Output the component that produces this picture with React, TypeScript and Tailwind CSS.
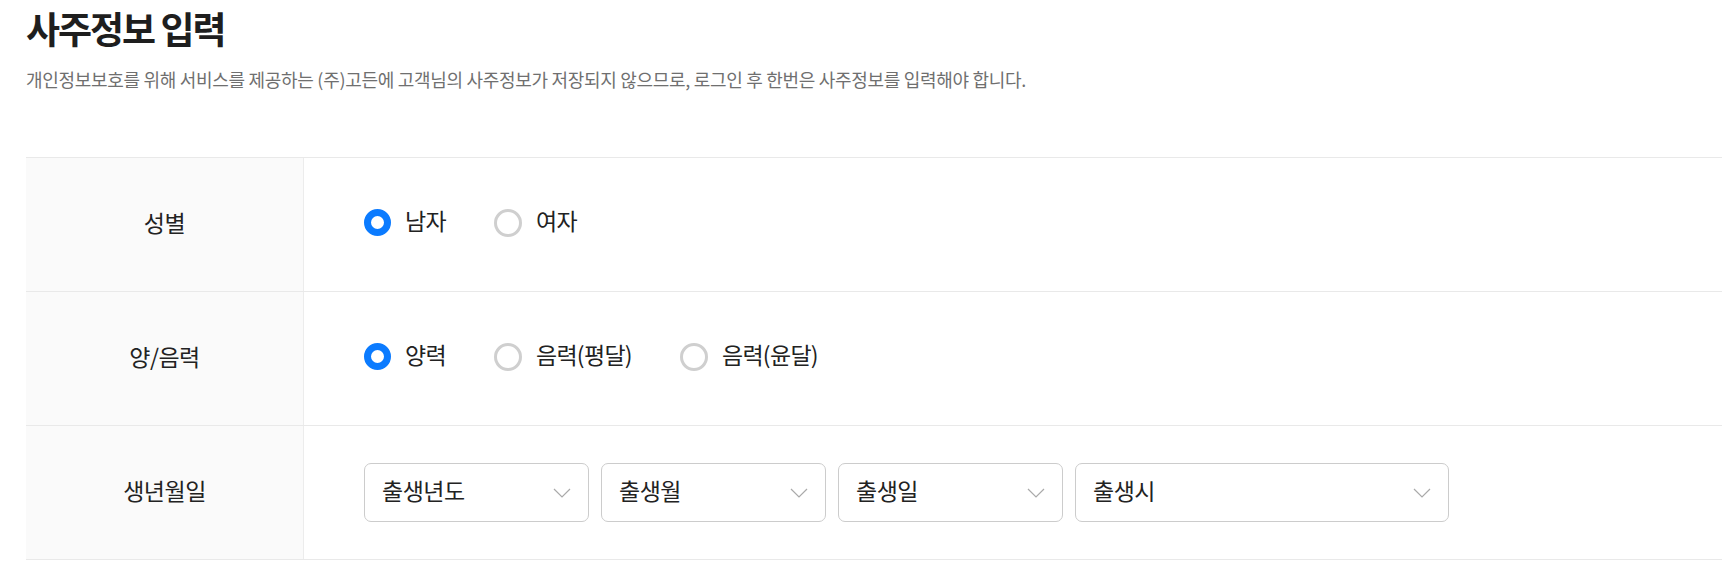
import React from "react";

const font = { fontFamily: '"Noto Sans CJK KR", "Noto Sans", sans-serif' };

const Radio = ({ label, checked }: { label: string; checked?: boolean }) => (
  <label className="flex items-center gap-[14px] cursor-pointer">
    {checked ? (
      <span className="w-[27px] h-[27px] rounded-full border-[7px] border-[#0b7bff] bg-white" />
    ) : (
      <span className="w-[28px] h-[28px] rounded-full border-[3px] border-[#cfcfcf] bg-white" />
    )}
    <span className="text-[23px] text-[#222] tracking-[-0.7px] pb-[4px]">{label}</span>
  </label>
);

const Chevron = () => (
  <svg width="18" height="10" viewBox="0 0 18 10" fill="none">
    <polyline points="1,1 9,9 17,1" stroke="#aaaaaa" strokeWidth="1.2" />
  </svg>
);

const Select = ({ placeholder, width }: { placeholder: string; width: string }) => (
  <div className={`${width} h-[59px] flex items-center justify-between pl-[17px] pr-[17px] border border-[#cccccc] rounded-[7px] bg-white`}>
    <span className="text-[23px] text-[#222] tracking-[-0.5px] pb-[4px]">{placeholder}</span>
    <Chevron />
  </div>
);

const Row = ({ label, children }: { label: string; children: React.ReactNode }) => (
  <div className="flex border-b border-[#e9e9e9]">
    <div className="w-[278px] h-[133px] shrink-0 flex items-center justify-center pb-[4px] bg-[#fafafa] border-r border-[#ececec] text-[23px] text-[#222] tracking-[-0.5px]">
      {label}
    </div>
    <div className="flex-1 flex items-center pl-[60px]">{children}</div>
  </div>
);

export default function App() {
  return (
    <div className="bg-white min-h-[574px] pl-[26px] pt-[6px]" style={font}>
      <h1 className="text-[37px] leading-[44px] font-bold text-[#1e1e1e] tracking-[-2px]">사주정보 입력</h1>
      <p className="mt-[16px] text-[18px] leading-[26px] text-[#6f6f6f] tracking-[-0.3px]">
        개인정보보호를 위해 서비스를 제공하는 (주)고든에 고객님의 사주정보가 저장되지 않으므로, 로그인 후 한번은 사주정보를 입력해야 합니다.
      </p>

      <div className="mt-[65px] border-t border-[#e9e9e9]">
        <Row label="성별">
          <div className="flex items-center gap-[48px] pb-[4px]">
            <Radio label="남자" checked />
            <Radio label="여자" />
          </div>
        </Row>
        <Row label="양/음력">
          <div className="flex items-center gap-[48px] pb-[4px]">
            <Radio label="양력" checked />
            <Radio label="음력(평달)" />
            <Radio label="음력(윤달)" />
          </div>
        </Row>
        <Row label="생년월일">
          <div className="flex items-center gap-[12px]">
            <Select placeholder="출생년도" width="w-[225px]" />
            <Select placeholder="출생월" width="w-[225px]" />
            <Select placeholder="출생일" width="w-[225px]" />
            <Select placeholder="출생시" width="w-[374px]" />
          </div>
        </Row>
      </div>
    </div>
  );
}
